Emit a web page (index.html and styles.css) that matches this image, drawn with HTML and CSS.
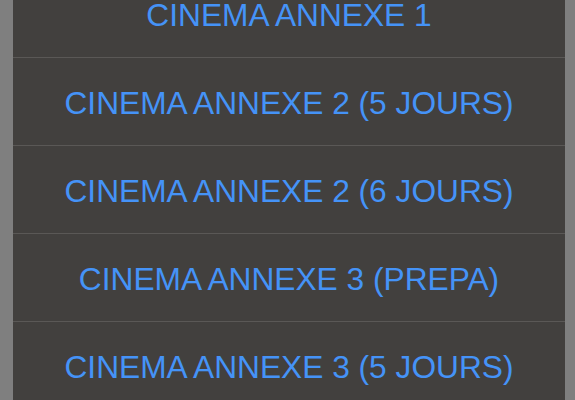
FILE: index.html
```html
<!DOCTYPE html>
<html lang="fr">
<head>
  <meta charset="UTF-8" />
  <meta name="viewport" content="width=device-width, initial-scale=1.0"/>
  <title>Salles</title>
  <link rel="stylesheet" href="styles.css">
</head>
<body>
  <div class="sheet">
    <ul class="list">
      <li class="item item-top">CINEMA ANNEXE 1</li>
      <li class="item">CINEMA ANNEXE 2 (5 JOURS)</li>
      <li class="item">CINEMA ANNEXE 2 (6 JOURS)</li>
      <li class="item">CINEMA ANNEXE 3 (PREPA)</li>
      <li class="item">CINEMA ANNEXE 3 (5 JOURS)</li>
    </ul>
  </div>
</body>
</html>
```

FILE: styles.css
```css
html, body {
  margin: 0;
  height: 100%;
  overflow: hidden;
}
body {
  background-color: #7f7f7f;
  font-family: "Liberation Sans", Arial, sans-serif;
  padding: 0 10px 0 13px;
}
.sheet {
  background-color: #42403e;
  height: 100%;
  overflow: hidden;
}
.list {
  list-style: none;
  margin: 0;
  padding: 0;
}
.item {
  box-sizing: border-box;
  height: 88px;
  padding-top: 2px;
  border-bottom: 1px solid #5a5856;
  display: flex;
  align-items: center;
  justify-content: center;
  color: #4593f7;
  font-size: 31.7px;
  line-height: 26px;
  white-space: nowrap;
}
/* list is scrolled, only the bottom of the first row shows */
.item-top {
  height: 58px;
  padding-top: 0;
  padding-bottom: 28px;
}
```
